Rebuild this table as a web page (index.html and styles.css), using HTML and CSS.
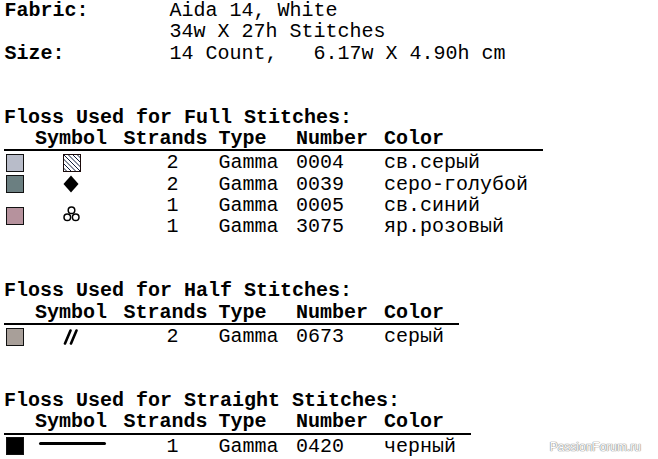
FILE: index.html
```html
<!DOCTYPE html>
<html>
<head>
<meta charset="utf-8">
<link rel="stylesheet" href="styles.css">
</head>
<body>
<div class="page">
  <div class="info">
    <span class="lbl">Fabric:</span><span class="val">Aida 14, White</span>
    <span class="lbl"></span><span class="val">34w X 27h Stitches</span>
    <span class="lbl">Size:</span><span class="val">14 Count,   6.17w X 4.90h cm</span>
  </div>

  <section class="sec">
    <div class="title">Floss Used for Full Stitches:</div>
    <table class="floss">
      <thead>
        <tr><th class="c-sw"></th><th class="c-sym">Symbol</th><th class="c-str">Strands</th><th class="c-type">Type</th><th class="c-num">Number</th><th class="c-col">Color</th></tr>
      </thead>
      <tbody>
        <tr>
          <td><span class="swatch sw-1"></span></td>
          <td class="sym"><svg width="18" height="18" viewBox="0 0 18 18"><defs><clipPath id="cb"><rect x="1" y="1" width="16" height="16"/></clipPath></defs><rect x="0.5" y="0.5" width="17" height="17" fill="#fff" stroke="#1a0a0a"/><g clip-path="url(#cb)" stroke="#0c1a3a" stroke-width="1"><line x1="-13.5" y1="0" x2="4.5" y2="18"/><line x1="-9" y1="0" x2="9" y2="18"/><line x1="-4.5" y1="0" x2="13.5" y2="18"/><line x1="0" y1="0" x2="18" y2="18"/><line x1="4.5" y1="0" x2="22.5" y2="18"/><line x1="9" y1="0" x2="27" y2="18"/><line x1="13.5" y1="0" x2="31.5" y2="18"/></g></svg></td>
          <td class="str">2</td><td>Gamma</td><td>0004</td><td class="col">св.серый</td>
        </tr>
        <tr>
          <td><span class="swatch sw-2"></span></td>
          <td class="sym"><svg width="16" height="18" viewBox="0 0 16 18"><polygon points="8,0.5 15.5,9 8,17.5 0.5,9" fill="#000"/></svg></td>
          <td class="str">2</td><td>Gamma</td><td>0039</td><td class="col">серо-голубой</td>
        </tr>
        <tr>
          <td rowspan="2"><span class="swatch sw-3"></span></td>
          <td rowspan="2" class="sym sym-up"><svg width="17" height="16" viewBox="0 0 17 16"><g fill="none" stroke="#000" stroke-width="1.5"><circle cx="8.5" cy="4.2" r="3.3"/><circle cx="4.3" cy="11.3" r="3.3"/><circle cx="12.7" cy="11.3" r="3.3"/></g></svg></td>
          <td class="str">1</td><td>Gamma</td><td>0005</td><td class="col">св.синий</td>
        </tr>
        <tr>
          <td class="str">1</td><td>Gamma</td><td>3075</td><td class="col">яр.розовый</td>
        </tr>
      </tbody>
    </table>
  </section>

  <section class="sec">
    <div class="title">Floss Used for Half Stitches:</div>
    <table class="floss">
      <thead>
        <tr><th class="c-sw"></th><th class="c-sym">Symbol</th><th class="c-str">Strands</th><th class="c-type">Type</th><th class="c-num">Number</th><th class="c-col">Color</th></tr>
      </thead>
      <tbody>
        <tr>
          <td><span class="swatch sw-4"></span></td>
          <td class="sym"><svg width="16" height="16" viewBox="0 0 16 16"><g stroke="#000" stroke-width="2.6" stroke-linecap="round"><line x1="2" y1="14.5" x2="7.5" y2="1.5"/><line x1="8" y1="14.5" x2="13.5" y2="1.5"/></g></svg></td>
          <td class="str">2</td><td>Gamma</td><td>0673</td><td class="col">серый</td>
        </tr>
      </tbody>
    </table>
  </section>

  <section class="sec">
    <div class="title">Floss Used for Straight Stitches:</div>
    <table class="floss">
      <thead>
        <tr><th class="c-sw"></th><th class="c-sym">Symbol</th><th class="c-str">Strands</th><th class="c-type">Type</th><th class="c-num">Number</th><th class="c-col">Color</th></tr>
      </thead>
      <tbody>
        <tr>
          <td><span class="swatch sw-5"></span></td>
          <td class="sym sym-line"><span class="bar"></span></td>
          <td class="str">1</td><td>Gamma</td><td>0420</td><td class="col">черный</td>
        </tr>
      </tbody>
    </table>
  </section>
</div>
<div class="watermark">PassionForum.ru</div>
</body>
</html>
```

FILE: styles.css
```css
html, body {
  margin: 0;
  padding: 0;
  background: #fff;
}

body {
  font-family: "Courier New", "Nimbus Mono PS", "Nimbus Mono L", "FreeMono", "Liberation Mono", monospace;
  font-size: 20px;
  line-height: 21.33px;
  color: #000;
  position: relative;
  width: 658px;
  height: 459px;
  overflow: hidden;
}

.page {
  padding-left: 4px;
}

.info {
  display: grid;
  grid-template-columns: 165.5px auto;
  white-space: pre;
}

.lbl,
.title {
  font-weight: bold;
}

.info .lbl {
  padding-left: 0.5px;
}

.sec {
  margin-top: 42.67px;
}

.floss {
  border-collapse: separate;
  border-spacing: 0;
}

.floss th {
  font-weight: bold;
  text-align: left;
  padding: 0;
  height: 21.33px;
  border-bottom: 2px solid #000;
  white-space: nowrap;
}

.floss td {
  padding: 0;
  vertical-align: middle;
  white-space: nowrap;
}

.floss tbody tr:first-child td {
  padding-top: 1px;
}

.c-sw { width: 31px; }
.c-sym { width: 88.5px; }
.c-str { width: 95px; }
.c-type { width: 77.5px; }
.c-num { width: 88px; }

.floss th.c-col,
.floss td.col {
  padding-right: 14.5px;
}

.floss td.str {
  padding-left: 43px;
}

.swatch {
  display: block;
  width: 16px;
  height: 16px;
  margin-left: 2px;
  border: 1px solid #111;
}

.sw-1 { background: #b8bcc9; }
.sw-2 { background: #6b7f81; }
.sw-3 { background: #b6929d; }
.sw-4 { background: #a89f99; }
.sw-5 { background: #000; }

.floss td.sym {
  padding-left: 27.5px;
  line-height: 0;
}

.floss td.sym svg {
  display: block;
}

.floss td.sym-up svg {
  margin-top: -5px;
}

.floss td.sym-line {
  padding-left: 4px;
}

.bar {
  display: block;
  width: 67px;
  height: 3px;
  border-radius: 2px;
  background: #000;
  margin-top: -4px;
}

.watermark {
  position: absolute;
  right: 17px;
  top: 440px;
  font-family: "Liberation Sans", Arial, sans-serif;
  font-size: 12px;
  line-height: 14px;
  color: #fff;
  text-shadow: 0 0 1px #8a8a8a, 0 0 1px #8a8a8a, 0 0 1px #8a8a8a;
}
```
